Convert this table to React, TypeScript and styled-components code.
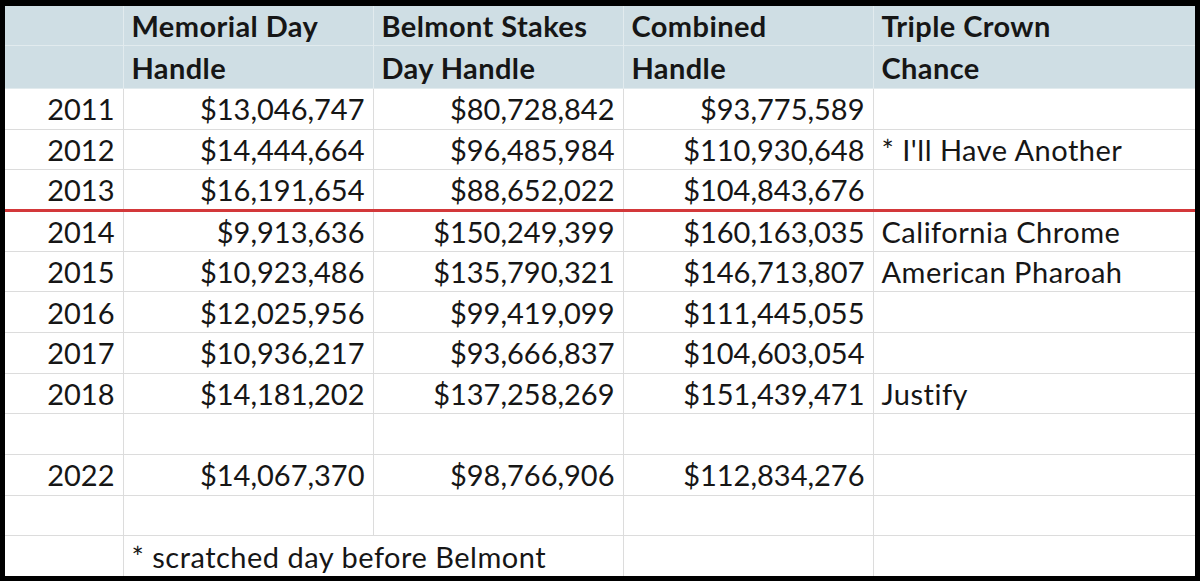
import React from "react";
import styled, { createGlobalStyle } from "styled-components";

const Global = createGlobalStyle`
  html, body { margin: 0; padding: 0; background: #000; }
  body { width: 1200px; height: 581px; overflow: hidden; }
`;

const Frame = styled.div`
  box-sizing: border-box;
  width: 1200px;
  height: 581px;
  padding: 6px 5px 6px 5px;
  background: #000;
`;

const Sheet = styled.table`
  width: 1190px;
  height: 569px;
  table-layout: fixed;
  border-collapse: collapse;
  background: #fff;
  font-family: Lato, "Open Sans", sans-serif;
  font-size: 29px;
  color: #161616;
`;

const HeadCell = styled.th<{ $h: number }>`
  height: ${(p) => p.$h}px;
  padding: 0 8px;
  background: #cfdee4;
  font-weight: 700;
  text-align: left;
  letter-spacing: 0.4px;
  white-space: nowrap;
  border: 1.5px solid #e2ebee;
  border-top: none;
  &:first-child { border-left: none; }
  &:last-child { border-right: none; }
`;

const Row = styled.tr<{ $red?: boolean }>`
  height: 40.67px;
  td {
    border-bottom: ${(p) => (p.$red ? "3px solid #d3383a" : "1.5px solid #dcdcdc")};
  }
`;

const Cell = styled.td<{ $num?: boolean }>`
  padding: 0 ${(p) => (p.$num ? "8px" : "8px")};
  text-align: ${(p) => (p.$num ? "right" : "left")};
  letter-spacing: ${(p) => (p.$num ? "0" : "0.5px")};
  white-space: nowrap;
  border-left: 1.5px solid #dcdcdc;
  border-right: 1.5px solid #dcdcdc;
  &:first-child { border-left: none; }
  &:last-child { border-right: none; }
  tr:last-child > & { border-bottom: none; }
`;

type R = [string, string, string, string, string];

const rows: R[] = [
  ["2011", "$13,046,747", "$80,728,842", "$93,775,589", ""],
  ["2012", "$14,444,664", "$96,485,984", "$110,930,648", "* I'll Have Another"],
  ["2013", "$16,191,654", "$88,652,022", "$104,843,676", ""],
  ["2014", "$9,913,636", "$150,249,399", "$160,163,035", "California Chrome"],
  ["2015", "$10,923,486", "$135,790,321", "$146,713,807", "American Pharoah"],
  ["2016", "$12,025,956", "$99,419,099", "$111,445,055", ""],
  ["2017", "$10,936,217", "$93,666,837", "$104,603,054", ""],
  ["2018", "$14,181,202", "$137,258,269", "$151,439,471", "Justify"],
  ["", "", "", "", ""],
  ["2022", "$14,067,370", "$98,766,906", "$112,834,276", ""],
  ["", "", "", "", ""],
];

export default function App() {
  return (
    <Frame>
      <Global />
      <Sheet>
        <colgroup>
          <col style={{ width: 118 }} />
          <col style={{ width: 250 }} />
          <col style={{ width: 250 }} />
          <col style={{ width: 250 }} />
          <col style={{ width: 322 }} />
        </colgroup>
        <thead>
          <tr>
            <HeadCell $h={39}></HeadCell>
            <HeadCell $h={39}>Memorial Day</HeadCell>
            <HeadCell $h={39}>Belmont Stakes</HeadCell>
            <HeadCell $h={39}>Combined</HeadCell>
            <HeadCell $h={39}>Triple Crown</HeadCell>
          </tr>
          <tr>
            <HeadCell $h={42}></HeadCell>
            <HeadCell $h={42}>Handle</HeadCell>
            <HeadCell $h={42}>Day Handle</HeadCell>
            <HeadCell $h={42}>Handle</HeadCell>
            <HeadCell $h={42}>Chance</HeadCell>
          </tr>
        </thead>
        <tbody>
          {rows.map((r, i) => (
            <Row key={i} $red={r[0] === "2013"}>
              <Cell $num>{r[0]}</Cell>
              <Cell $num>{r[1]}</Cell>
              <Cell $num>{r[2]}</Cell>
              <Cell $num>{r[3]}</Cell>
              <Cell>{r[4]}</Cell>
            </Row>
          ))}
          <Row>
            <Cell></Cell>
            <Cell colSpan={2}>* scratched day before Belmont</Cell>
            <Cell></Cell>
            <Cell></Cell>
          </Row>
        </tbody>
      </Sheet>
    </Frame>
  );
}
